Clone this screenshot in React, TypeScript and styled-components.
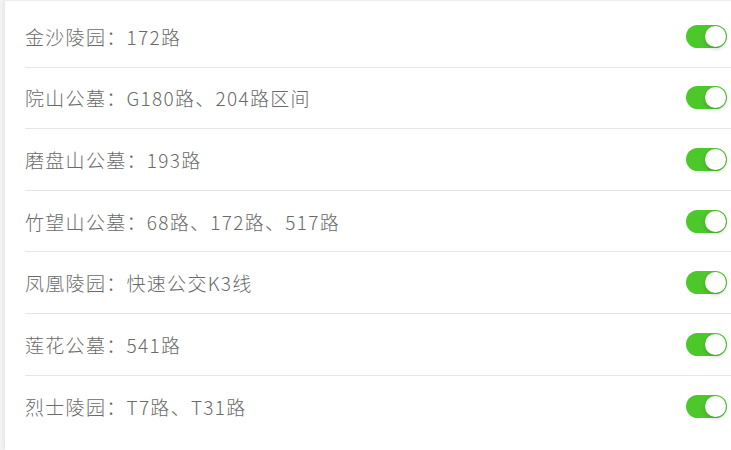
import React, { useState } from 'react';
import styled, { createGlobalStyle } from 'styled-components';

const GlobalStyle = createGlobalStyle`
  html, body {
    margin: 0;
    padding: 0;
    background: #ffffff;
    overflow: hidden;
  }
  body {
    font-family: "Noto Sans CJK SC", "Noto Sans", sans-serif;
  }
`;

const Page = styled.div`
  width: 731px;
  height: 450px;
  background: #f4f4f4;
  padding-left: 5px;
  box-sizing: border-box;
`;

const Card = styled.div`
  background: #ffffff;
  height: 100%;
  border-top: 1px solid #ececec;
  box-shadow: -2px 0 4px rgba(0, 0, 0, 0.06);
  padding: 5px 0 0 20px;
  box-sizing: border-box;
`;

const List = styled.ul`
  list-style: none;
  margin: 0;
  padding: 0;
`;

const Row = styled.li<{ $last?: boolean }>`
  display: flex;
  align-items: center;
  justify-content: space-between;
  height: 61.6px;
  box-sizing: border-box;
  padding-right: 4px;
  border-bottom: ${({ $last }) => ($last ? 'none' : '1px solid #e6e6e6')};
`;

const Label = styled.span`
  font-size: 19px;
  font-weight: 300;
  color: #6a6a6a;
  letter-spacing: 1.3px;
`;

const Track = styled.button<{ $on: boolean }>`
  position: relative;
  width: 41px;
  height: 23px;
  border: none;
  padding: 0;
  border-radius: 12px;
  background: ${({ $on }) => ($on ? '#4dc82b' : '#dcdcdc')};
  cursor: pointer;
  flex-shrink: 0;
`;

const Knob = styled.span<{ $on: boolean }>`
  position: absolute;
  top: 1px;
  left: ${({ $on }) => ($on ? '19px' : '1px')};
  width: 21px;
  height: 21px;
  border-radius: 50%;
  background: #ffffff;
  box-shadow: 0 2px 4px rgba(0, 0, 0, 0.18);
  transition: left 0.2s ease;
`;

const items = [
  '金沙陵园：172路',
  '院山公墓：G180路、204路区间',
  '磨盘山公墓：193路',
  '竹望山公墓：68路、172路、517路',
  '凤凰陵园：快速公交K3线',
  '莲花公墓：541路',
  '烈士陵园：T7路、T31路',
];

const Switch: React.FC = () => {
  const [on, setOn] = useState(true);
  return (
    <Track $on={on} onClick={() => setOn(!on)}>
      <Knob $on={on} />
    </Track>
  );
};

export default function App() {
  return (
    <>
      <GlobalStyle />
      <Page>
        <Card>
          <List>
            {items.map((text, i) => (
              <Row key={text} $last={i === items.length - 1}>
                <Label>{text}</Label>
                <Switch />
              </Row>
            ))}
          </List>
        </Card>
      </Page>
    </>
  );
}
